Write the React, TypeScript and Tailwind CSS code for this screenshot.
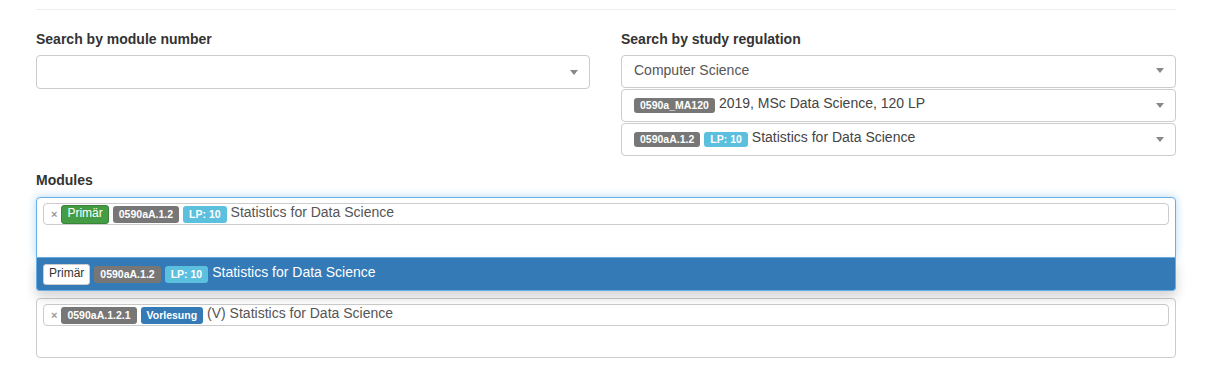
import React from "react";

const Caret = () => (
  <span className="inline-block w-0 h-0 border-l-[4px] border-r-[4px] border-t-[5px] border-l-transparent border-r-transparent border-t-[#888]" />
);

const Badge = ({ color, children }: { color: string; children: React.ReactNode }) => (
  <span
    className={
      "inline-flex items-center h-[15px] rounded-[3px] px-[6px] text-[10.5px] font-bold leading-none text-white whitespace-nowrap " +
      color
    }
  >
    {children}
  </span>
);

const BigBadge = ({ color, children }: { color: string; children: React.ReactNode }) => (
  <span
    className={
      "inline-flex items-center h-[17px] rounded-[3px] px-[6px] text-[10.5px] font-bold leading-none text-white whitespace-nowrap " +
      color
    }
  >
    {children}
  </span>
);

const SelectBox = ({ children, className = "" }: { children?: React.ReactNode; className?: string }) => (
  <div
    className={
      "flex items-center justify-between border border-[#ccc] rounded-[4px] bg-white pl-[12px] pr-[11px] text-[14px] text-[#555] " +
      className
    }
  >
    <div className="flex items-center gap-[4px] whitespace-nowrap">{children}</div>
    <Caret />
  </div>
);

const Remove = () => <span className="text-[#999] font-bold text-[11px] leading-none">×</span>;

export default function App() {
  return (
    <div className="w-[1222px] h-[373px] overflow-hidden bg-white text-[14px] text-[#333] font-['Liberation_Sans',Arial,sans-serif]">
      <div className="ml-[36px] w-[1140px]">
        <div className="h-[9px]" />
        <div className="border-t border-[#eee]" />

        <div className="grid grid-cols-[554px_555px] gap-x-[31px] mt-[19px]">
          <div className="flex flex-col">
            <div className="h-[20px] leading-[20px] font-bold mb-[6px]">Search by module number</div>
            <SelectBox className="h-[34px]" />
          </div>
          <div className="flex flex-col">
            <div className="h-[20px] leading-[20px] font-bold mb-[6px]">Search by study regulation</div>
            <div className="flex flex-col gap-[1px]">
              <SelectBox className="h-[33px] pb-[2px]">
                <span>Computer Science</span>
              </SelectBox>
              <SelectBox className="h-[33px] pb-[1px]">
                <Badge color="bg-[#777]">0590a_MA120</Badge>
                <span className="text-[#444] -mt-[3px]">2019, MSc Data Science, 120 LP</span>
              </SelectBox>
              <SelectBox className="h-[33px] pb-[1px]">
                <Badge color="bg-[#777]">0590aA.1.2</Badge>
                <Badge color="bg-[#5bc0de]">LP: 10</Badge>
                <span className="text-[#444] -mt-[3px]">Statistics for Data Science</span>
              </SelectBox>
            </div>
          </div>
        </div>

        <div className="mt-[14px] h-[20px] leading-[20px] font-bold mb-[7px]">Modules</div>

        <div className="relative">
          <div className="h-[61px] border border-[#66afe9] rounded-t-[4px] bg-white pt-[5px] px-[6px] shadow-[0_0_8px_rgba(102,175,233,0.5)]">
            <div className="h-[22px] border border-[#ccc] rounded-[4px] flex items-center pl-[7px] gap-[4px] text-[#555] whitespace-nowrap">
              <Remove />
              <span className="inline-flex items-start h-[19px] px-[5px] rounded-[3px] bg-[#449d44] border border-[#398439] text-white text-[12px] leading-[15px]">
                Primär
              </span>
              <BigBadge color="bg-[#777]">0590aA.1.2</BigBadge>
              <BigBadge color="bg-[#5bc0de]">LP: 10</BigBadge>
              <span className="-mt-[3px]">Statistics for Data Science</span>
            </div>
          </div>
          <div className="absolute left-0 right-0 top-full z-10 h-[33px] border border-t-0 border-[#66afe9] rounded-b-[4px] bg-[#337ab7] shadow-[0_6px_12px_rgba(0,0,0,0.175)] flex items-center pl-[6px] gap-[4px] text-white whitespace-nowrap">
            <span className="inline-flex items-start h-[21px] px-[5px] rounded-[3px] bg-white border border-[#ccc] text-[#333] text-[12px] leading-[17px]">
              Primär
            </span>
            <BigBadge color="bg-[#777]">0590aA.1.2</BigBadge>
            <BigBadge color="bg-[#5bc0de]">LP: 10</BigBadge>
            <span className="-mt-[3px]">Statistics for Data Science</span>
          </div>
        </div>

        <div className="mt-[40px] h-[60px] border border-[#ccc] rounded-[4px] bg-white pt-[5px] px-[6px]">
          <div className="h-[22px] border border-[#ccc] rounded-[4px] flex items-center pl-[7px] gap-[4px] text-[#555] whitespace-nowrap">
            <Remove />
            <BigBadge color="bg-[#777]">0590aA.1.2.1</BigBadge>
            <BigBadge color="bg-[#337ab7]">Vorlesung</BigBadge>
            <span className="-mt-[3px]">(V) Statistics for Data Science</span>
          </div>
        </div>
      </div>
    </div>
  );
}
